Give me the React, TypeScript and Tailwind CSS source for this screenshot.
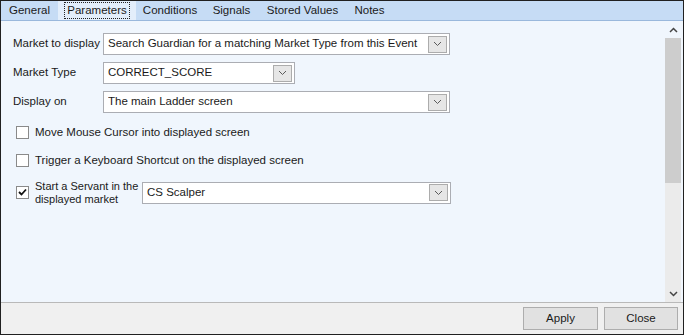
import React from "react";

function Chevron() {
  return (
    <svg width="9" height="6" viewBox="0 0 9 6" fill="none">
      <path d="M1 1 L4.5 4.5 L8 1" stroke="#5a5a5a" strokeWidth="1" />
    </svg>
  );
}

function Select({ text, className }: { text: string; className: string }) {
  return (
    <div className={`flex items-center h-[22px] border border-[#abadb3] bg-white pl-[4px] pr-[2px] ${className}`}>
      <span className="flex-1 whitespace-nowrap overflow-hidden">{text}</span>
      <div className="w-[19px] h-[17px] bg-[#e6e6e6] border border-[#acacac] flex items-center justify-center">
        <Chevron />
      </div>
    </div>
  );
}

function Checkbox({ checked }: { checked?: boolean }) {
  return (
    <div className="w-[13px] h-[13px] border border-[#8a8a8a] bg-white flex items-center justify-center shrink-0">
      {checked && (
        <svg width="9" height="9" viewBox="0 0 9 9">
          <path d="M1 4 L3.5 6.5 L8 1.5" stroke="#111" strokeWidth="1.8" fill="none" />
        </svg>
      )}
    </div>
  );
}

const tabs: [string, string][] = [
  ["General", "w-[57px]"],
  ["Parameters", "w-[78px]"],
  ["Conditions", "w-[68px]"],
  ["Signals", "w-[55px]"],
  ["Stored Values", "w-[87px]"],
  ["Notes", "w-[47px]"],
];

export default function App() {
  return (
    <div
      className="w-[684px] h-[335px] border border-[#202020] bg-[#f0f6fd] flex flex-col text-[11.5px] text-[#1a1a1a] overflow-hidden"
      style={{ fontFamily: '"Liberation Sans", Arial, sans-serif' }}
    >
      <div className="h-[20px] bg-[#c6dcf5] border-b border-[#9ab8dc] flex items-end shrink-0">
        {tabs.map(([t, w]) => (
          <div
            key={t}
            className={
              t === "Parameters"
                ? `${w} h-[20px] flex items-center justify-center bg-[#e3eefb]`
                : `${w} h-[19px] flex items-center justify-center`
            }
          >
            <span
              className={
                t === "Parameters"
                  ? "border border-dotted border-[#222] px-[2px] leading-[15px] whitespace-nowrap"
                  : "whitespace-nowrap"
              }
            >
              {t}
            </span>
          </div>
        ))}
      </div>
      <div className="flex flex-1 min-h-0">
        <div className="flex-1 pl-[12px] pt-[12px] flex flex-col">
          <div className="flex items-center">
            <span className="w-[90px] whitespace-nowrap">Market to display</span>
            <Select text="Search Guardian for a matching Market Type from this Event" className="w-[347px]" />
          </div>
          <div className="flex items-center mt-[7px]">
            <span className="w-[90px] whitespace-nowrap">Market Type</span>
            <Select text="CORRECT_SCORE" className="w-[192px]" />
          </div>
          <div className="flex items-center mt-[7px]">
            <span className="w-[90px] whitespace-nowrap">Display on</span>
            <Select text="The main Ladder screen" className="w-[347px]" />
          </div>
          <div className="flex items-center gap-[6px] mt-[11px] pl-[3px]">
            <Checkbox />
            <span className="whitespace-nowrap">Move Mouse Cursor into displayed screen</span>
          </div>
          <div className="flex items-center gap-[6px] mt-[11px] pl-[3px]">
            <Checkbox />
            <span className="whitespace-nowrap">Trigger a Keyboard Shortcut on the displayed screen</span>
          </div>
          <div className="flex items-center mt-[10px] pl-[3px]">
            <Checkbox checked />
            <span className="ml-[6px] w-[107px] text-[11px] leading-[13px] whitespace-nowrap">
              Start a Servant in the
              <br />
              displayed market
            </span>
            <Select text="CS Scalper" className="w-[309px]" />
          </div>
        </div>
        <div className="w-[16px] bg-[#ebebeb] flex flex-col items-center mr-[2px]">
          <div className="h-[17px] w-full flex items-center justify-center bg-[#f0f6fd]">
            <svg width="9" height="6" viewBox="0 0 9 6"><path d="M1 5 L4.5 1.5 L8 5" stroke="#444" strokeWidth="1.5" fill="none" /></svg>
          </div>
          <div className="h-[145px] w-full bg-[#cdcdcd]" />
          <div className="flex-1" />
          <div className="h-[17px] w-full flex items-center justify-center">
            <svg width="9" height="6" viewBox="0 0 9 6"><path d="M1 1 L4.5 4.5 L8 1" stroke="#444" strokeWidth="1.5" fill="none" /></svg>
          </div>
        </div>
      </div>
      <div className="h-[32px] border-t border-[#b9b9b9] bg-[#f0f0f0] flex items-center justify-end gap-[6px] pr-[5px] shrink-0">
        <button className="w-[75px] h-[23px] bg-[#e1e1e1] border border-[#adadad]">Apply</button>
        <button className="w-[74px] h-[23px] bg-[#e1e1e1] border border-[#adadad]">Close</button>
      </div>
    </div>
  );
}
